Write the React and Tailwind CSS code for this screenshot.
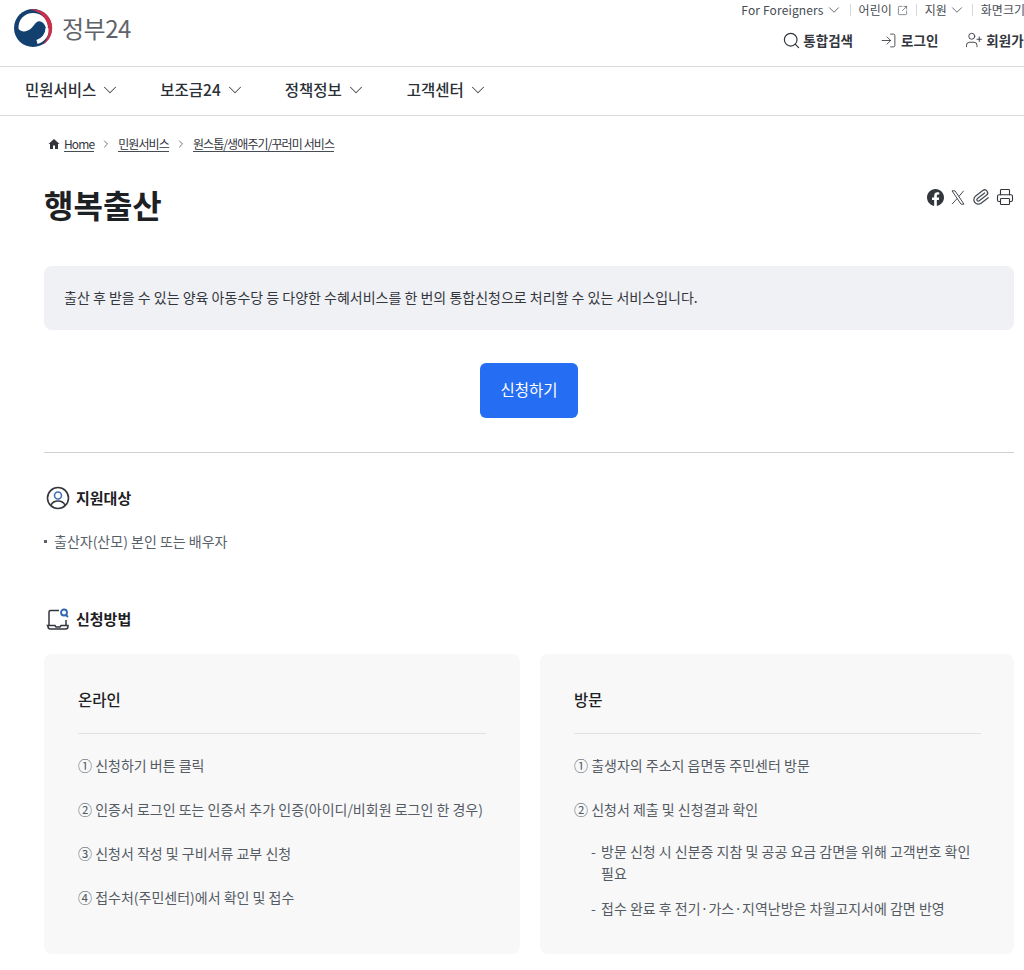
import React from "react";
import { ChevronDown, ChevronRight, Search, LogIn, UserPlus, SquareArrowOutUpRight, Paperclip, Printer } from "lucide-react";

const font = "font-['Noto_Sans_CJK_KR','Noto_Sans',sans-serif]";

function Logo() {
  return (
    <svg width="40" height="40" viewBox="0 0 40 40">
      <circle cx="20" cy="20" r="19" fill="#12406f" />
      <path d="M5.500 21C5 11 12 5 20 5c8 0 15 6 15 14l-1.500 3C32 15 28 12.500 25 13.500c-3 1-4 4.500-7 7-3.500 3-9 4.500-12.500.5z" fill="#fff" />
      <path d="M34.500 20A14.500 14.500 0 0 1 24 34" fill="none" stroke="#fff" strokeWidth="4" />
      <path d="M17 1.500A19 19 0 0 1 30 36.500 21 21 0 0 0 17 1.500z" fill="#cd2e4a" />
    </svg>
  );
}

function Sep({ className }) {
  return <span className={`w-px h-3 bg-[#d5d7db] mr-[8px] ${className}`} />;
}

function NavItem({ label, className }) {
  return (
    <div className={`flex items-center gap-[3px] ${className}`}>
      <span className="text-[15.5px] font-medium text-[#2b2f36]">{label}</span>
      <ChevronDown size={22} strokeWidth={1.1} className="text-[#464c53]" />
    </div>
  );
}

function Crumb({ children, className }) {
  return <span className={`border-b border-[#464c53] text-[12px] leading-[15px] tracking-[-0.9px] text-[#33363d] ${className}`}>{children}</span>;
}

function Card({ title, className, children }) {
  return (
    <div className={`h-[300px] bg-[#f8f8f9] rounded-lg pl-[34px] pt-[32px] ${className}`}>
      <div className="text-[15.5px] font-medium leading-[26px] text-[#1e2124] pb-[21px] border-b border-[#dfe1e4]">{title}</div>
      <div className="pt-[9px] text-[14px] text-[#555b63]">{children}</div>
    </div>
  );
}

function Step({ children }) {
  return <p className="leading-[22px] py-[11px]">{children}</p>;
}

function SubStep({ children, className }) {
  return (
    <div className={`flex leading-[22px] pl-[17px] ${className}`}>
      <span className="w-[10px] shrink-0">-</span>
      <span>{children}</span>
    </div>
  );
}

function Facebook() {
  return (
    <svg width="17" height="17" viewBox="0 0 24 24" fill="#33363d">
      <path d="M24 12.070C24 5.400 18.630 0 12 0S0 5.400 0 12.070c0 6.030 4.390 11.020 10.130 11.930v-8.440H7.080v-3.490h3.050V9.410c0-3.020 1.790-4.690 4.530-4.690 1.310 0 2.680.24 2.680.24v2.970h-1.510c-1.490 0-1.960.93-1.960 1.880v2.260h3.330l-.53 3.490h-2.800V24C19.610 23.090 24 18.100 24 12.070z" />
    </svg>
  );
}

function XLogo() {
  return (
    <svg width="16" height="17" viewBox="0 0 24 24" fill="none" stroke="#464c53" strokeWidth="1.500">
      <path d="M3 2h4.500L21 22h-4.500z" />
      <path d="M20.500 2 13.300 10.500M10.700 13.500 3 22" />
    </svg>
  );
}

function PersonIcon() {
  return (
    <svg width="24" height="24" viewBox="0 0 24 24" fill="none" strokeWidth="1.600">
      <circle cx="12" cy="12" r="10.500" stroke="#33363d" />
      <circle cx="12" cy="9.500" r="3.500" stroke="#3f6fb5" />
      <path d="M5 19c1.500-3 4-4 7-4s5.500 1 7 4" stroke="#33363d" />
    </svg>
  );
}

function LaptopIcon() {
  return (
    <svg width="24" height="24" viewBox="0 0 24 24" fill="none" strokeWidth="1.500">
      <path d="M13 3.500H4.500A1.500 1.500 0 0 0 3 5v13" stroke="#33363d" />
      <path d="M20 13v5" stroke="#33363d" />
      <path d="M1.500 18.500h7.500l1 1.500h4l1-1.500h7v1a2.500 2.500 0 0 1-2.500 2.500h-15a2.500 2.500 0 0 1-2.500-2.500z" stroke="#33363d" />
      <circle cx="18" cy="5.500" r="3" stroke="#2f65b5" strokeWidth="1.800" />
      <path d="m20 8 2 2" stroke="#2f65b5" strokeWidth="1.800" />
    </svg>
  );
}

export default function App() {
  return (
    <div className={`${font} w-[1024px] h-[970px] overflow-hidden bg-white`}>
      <header className="h-[67px] border-b border-[#d9dadc] flex justify-between">
        <div className="flex items-start pl-[13px] pt-[8px] gap-[9px]">
          <Logo />
          <span className="text-[24px] leading-[40px] tracking-[-0.5px] text-[#5f646b]">정부24</span>
        </div>
        <div className="flex flex-col items-end shrink-0 mr-[-12px] pt-[1px]">
          <div className="flex items-center h-[18px] mr-[11px] text-[12px] text-[#464c53] whitespace-nowrap">
            <span className="tracking-[0.15px]">For Foreigners</span>
            <ChevronDown size={18} strokeWidth={1.1} className="ml-[1px]" />
            <Sep className="ml-[7px]" />
            <span>어린이</span>
            <SquareArrowOutUpRight size={11} strokeWidth={1.4} className="ml-[5px]" />
            <Sep className="ml-[8px]" />
            <span>지원</span>
            <ChevronDown size={18} strokeWidth={1.1} className="ml-[1px]" />
            <Sep className="ml-[6px]" />
            <span>화면크기</span>
          </div>
          <div className="flex items-center mt-[11px] text-[13.5px] font-bold text-[#33363d] whitespace-nowrap">
            <Search size={19} strokeWidth={1.5} />
            <span className="ml-[2px]">통합검색</span>
            <LogIn size={17} strokeWidth={1.2} className="ml-[27px]" />
            <span className="ml-[4px]">로그인</span>
            <UserPlus size={18} strokeWidth={1.2} className="ml-[27px]" />
            <span className="ml-[3px]">회원가입</span>
          </div>
        </div>
      </header>

      <nav className="h-[49px] border-b border-[#d9dadc] flex items-center pl-[25px] pb-[2px]">
        <NavItem label="민원서비스" className="mr-[39px]" />
        <NavItem label="보조금24" className="mr-[39px]" />
        <NavItem label="정책정보" className="mr-[40px]" />
        <NavItem label="고객센터" />
      </nav>

      <main className="pl-[44px] pr-[10px]">
        <div className="flex items-center h-[16px] mt-[20px] pl-[4px]">
          <svg width="12" height="12" viewBox="0 0 24 24" fill="#33363d"><path d="M12 2 1 12h3v10h6v-7h4v7h6V12h3z" /></svg>
          <Crumb className="ml-[4px]">Home</Crumb>
          <ChevronRight size={12} strokeWidth={1.6} className="mx-[6px] text-[#464c53]" />
          <Crumb>민원서비스</Crumb>
          <ChevronRight size={12} strokeWidth={1.6} className="mx-[6px] text-[#464c53]" />
          <Crumb>원스톱/생애주기/꾸러미 서비스</Crumb>
        </div>

        <div className="flex justify-between items-start mt-[29px]">
          <h1 className="text-[32px] leading-[46px] font-bold text-[#1e2124]">행복출산</h1>
          <div className="flex items-center gap-[6px] mt-[7px]">
            <Facebook />
            <XLogo />
            <Paperclip size={18} strokeWidth={1.7} className="text-[#464c53] rotate-[8deg]" />
            <Printer size={18} strokeWidth={1.5} className="text-[#33363d]" />
          </div>
        </div>

        <div className="mt-[39px] h-[64px] bg-[#f0f1f5] rounded-lg flex items-center px-[20px] pb-[2px] text-[14px] text-[#33363d]">
          출산 후 받을 수 있는 양육 아동수당 등 다양한 수혜서비스를 한 번의 통합신청으로 처리할 수 있는 서비스입니다.
        </div>

        <div className="flex justify-center mt-[33px]">
          <button className="w-[98px] h-[55px] pb-[2px] bg-[#256ef4] rounded-md text-white text-[15.5px]">신청하기</button>
        </div>

        <div className="border-t border-[#cdd1d5] mt-[34px]" />

        <div className="flex items-center gap-[6px] mt-[33px] pl-[2px] h-[24px]">
          <PersonIcon />
          <h2 className="text-[15px] font-bold text-[#1e2124]">지원대상</h2>
        </div>
        <div className="flex items-center mt-[21px] h-[20px] text-[14px] text-[#58616a]">
          <span className="w-[3px] h-[3px] bg-[#58616a] mr-[7px]" />
          출산자(산모) 본인 또는 배우자
        </div>

        <div className="flex items-center gap-[6px] mt-[56px] pl-[2px] h-[24px]">
          <LaptopIcon />
          <h2 className="text-[15px] font-bold text-[#1e2124]">신청방법</h2>
        </div>

        <div className="flex gap-[20px] mt-[23px]">
          <Card title="온라인" className="w-[476px] pr-[34px]">
            <Step>① 신청하기 버튼 클릭</Step>
            <Step>② 인증서 로그인 또는 인증서 추가 인증(아이디/비회원 로그인 한 경우)</Step>
            <Step>③ 신청서 작성 및 구비서류 교부 신청</Step>
            <Step>④ 접수처(주민센터)에서 확인 및 접수</Step>
          </Card>
          <Card title="방문" className="flex-1 pr-[33px]">
            <Step>① 출생자의 주소지 읍면동 주민센터 방문</Step>
            <Step>② 신청서 제출 및 신청결과 확인</Step>
            <SubStep className="mt-[9px]">방문 신청 시 신분증 지참 및 공공 요금 감면을 위해 고객번호 확인 필요</SubStep>
            <SubStep className="mt-[13px]">접수 완료 후 전기·가스·지역난방은 차월고지서에 감면 반영</SubStep>
          </Card>
        </div>
      </main>
    </div>
  );
}
